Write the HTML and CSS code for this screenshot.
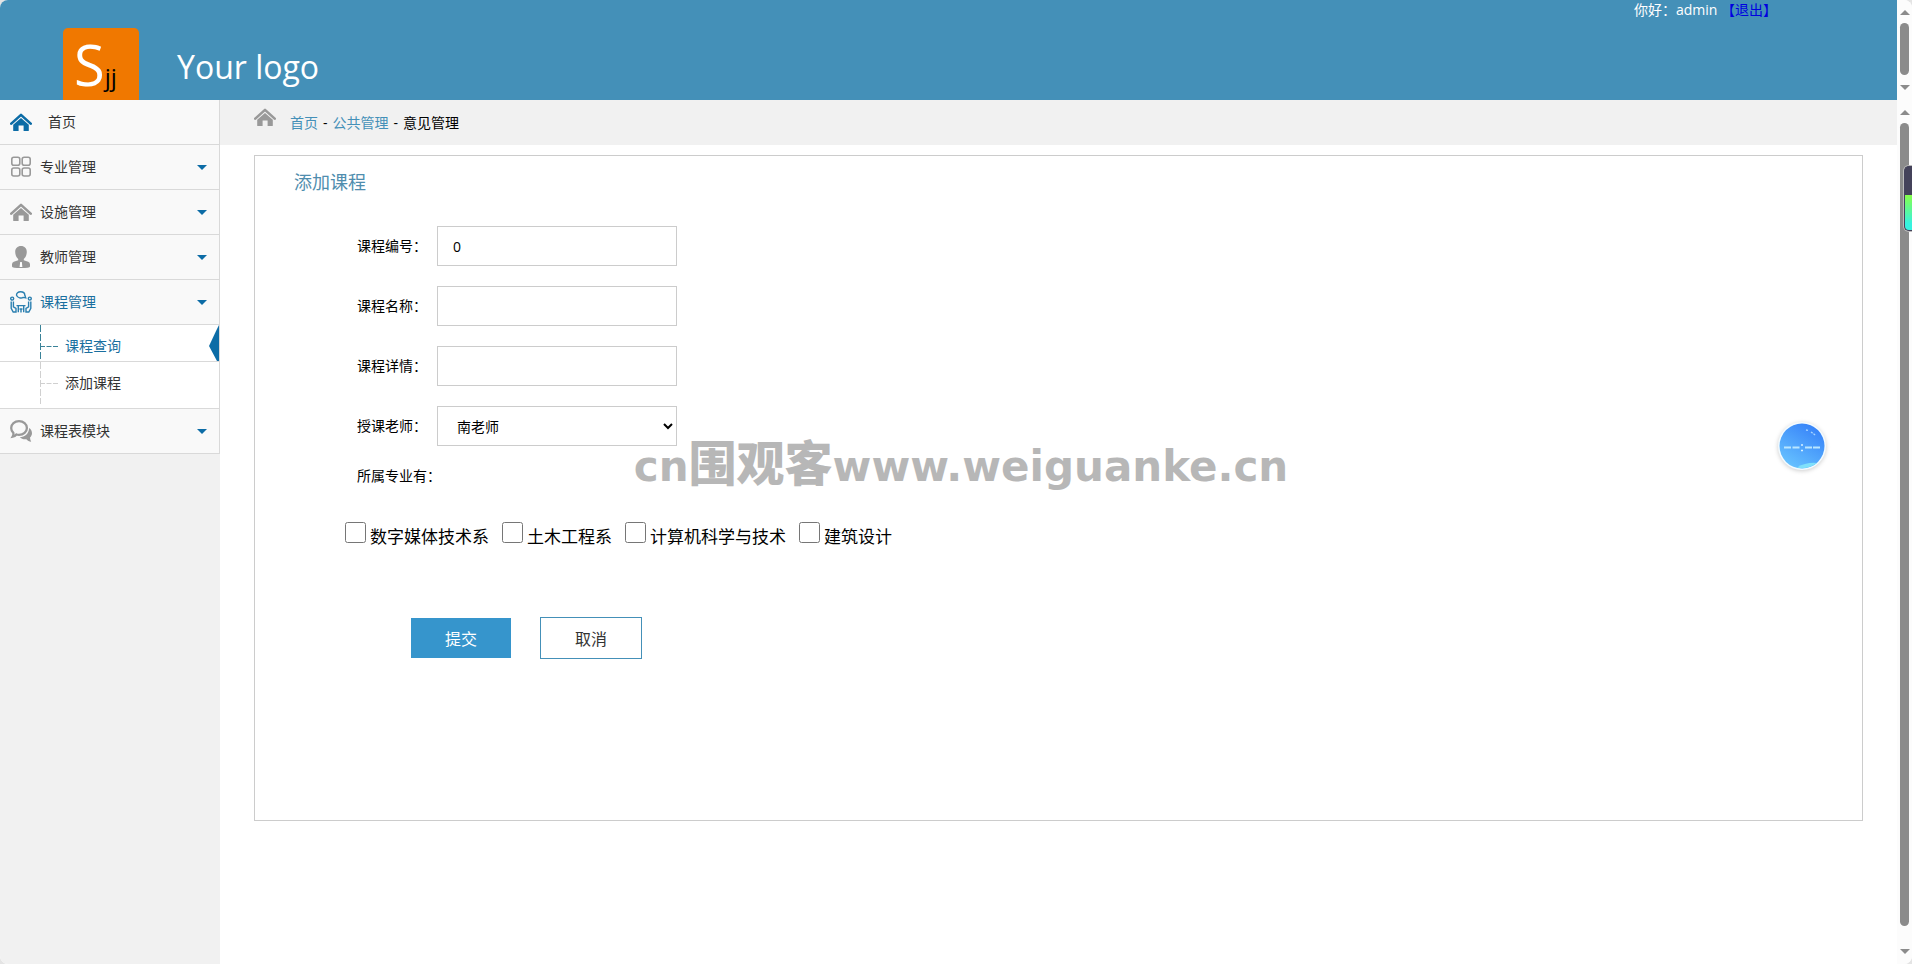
FILE: index.html
```html
<!DOCTYPE html>
<html lang="zh-CN">
<head>
  <meta charset="UTF-8">
  <meta name="viewport" content="width=device-width, initial-scale=1.0">
  <title>添加课程</title>
  <link rel="stylesheet" href="styles.css">
</head>
<body>
<svg class="defs" aria-hidden="true">
  <symbol id="icon-home" viewBox="0 0 22 18">
    <path d="M1.3 10.6 11 1.9l9.7 8.7" fill="none" stroke="currentColor" stroke-width="2.6" stroke-linecap="round" stroke-linejoin="round"/>
    <path d="M11 5 18.8 11.8V17.4q0 .6-.6.6H13.6V12.6H8.6V18H3.800q-.6 0-.6-.6V11.800Z" fill="currentColor"/>
  </symbol>
</svg>
<div class="page">
  <div class="top">
    <header class="header">
      <div class="logo"><span class="logo-s">S</span><span class="logo-j">jj</span></div>
      <div class="brand">Your logo</div>
      <div class="user">你好：admin <a href="#">【退出】</a></div>
    </header>
    <div class="scrollbar scrollbar-top">
      <span class="arrow-up"></span>
      <span class="thumb"></span>
      <span class="arrow-down"></span>
    </div>
  </div>

  <div class="main">
    <aside class="sidebar">
      <nav class="menu">
        <a class="menu-item home" href="#">
          <svg class="icon"><use href="#icon-home" y="2" width="22" height="18"/></svg>
          <span>首页</span>
        </a>
        <a class="menu-item" href="#">
          <svg class="icon" viewBox="0 0 22 22" fill="none" stroke="currentColor" stroke-width="1.6">
            <rect x="1.8" y="1.3" width="8" height="8" rx="2"/>
            <rect x="12.2" y="1.3" width="8" height="8" rx="2"/>
            <rect x="1.8" y="12" width="8" height="8" rx="2"/>
            <rect x="12.2" y="12" width="8" height="8" rx="2"/>
          </svg>
          <span>专业管理</span>
          <i class="caret"></i>
        </a>
        <a class="menu-item" href="#">
          <svg class="icon"><use href="#icon-home" y="2" width="22" height="18"/></svg>
          <span>设施管理</span>
          <i class="caret"></i>
        </a>
        <a class="menu-item" href="#">
          <svg class="icon" viewBox="0 0 22 22" fill="currentColor">
            <path d="M11 0c3.6 0 5.8 2.400 5.8 6 0 3-1.400 5.600-3 7v1.300l4.400 1.500q1.800.7 1.800 2.500v2.200Q20 22 11 22T2 20.500v-2.200q0-1.800 1.800-2.500l4.400-1.500V13c-1.600-1.400-3-4-3-7C5.200 2.400 7.400 0 11 0Z"/>
            <path d="M10.200 16h1.600l.6 5h-2.800Z" fill="#fff"/>
          </svg>
          <span>教师管理</span>
          <i class="caret"></i>
        </a>
        <a class="menu-item active" href="#">
          <svg class="icon" viewBox="0 0 22 22" fill="none" stroke="currentColor" stroke-width="1.4">
            <path d="M10.500.8c2.700 0 4.300 1.500 4.300 3.400l.9 2.700-2.500-.5c-1.600 1.200-5.800.8-6.700-2.300C6.500 2.300 8 .8 10.500.8Z"/>
            <circle cx="2.200" cy="7.600" r="1.500"/>
            <circle cx="19.800" cy="7.600" r="1.500"/>
            <path d="M1.200 10.500v6.800l2 3.700H6v-3.500l-2.600-1.700v-5.300M20.800 10.500v6.800l-2 3.700H16v-3.500l2.600-1.700v-5.300"/>
            <path d="M6.500 14.600h9M8.300 14.600v6.700M13.700 14.600v6.700M9.500 18h3M11 18v3.500"/>
          </svg>
          <span>课程管理</span>
          <i class="caret"></i>
        </a>
        <div class="submenu">
          <a class="sub-item current" href="#">
            <svg class="tree" viewBox="0 0 18 42" fill="none" stroke="currentColor">
              <path d="M.5 0V42" stroke-dasharray="7 2"/>
              <path d="M0 21.500H18" stroke-dasharray="5 1.500"/>
            </svg>
            <span>课程查询</span>
            <svg class="pointer" viewBox="0 0 10 36"><path d="M10 0V36H8L0 21 8 4Z" fill="#0c6ca6"/></svg>
          </a>
          <a class="sub-item last" href="#">
            <svg class="tree" viewBox="0 0 18 42" fill="none" stroke="currentColor">
              <path d="M.5 0V42" stroke-dasharray="7 2"/>
              <path d="M0 21.500H18" stroke-dasharray="5 1.500"/>
            </svg>
            <span>添加课程</span>
          </a>
        </div>
        <a class="menu-item" href="#">
          <svg class="icon" viewBox="0 0 22 22">
            <path d="M9 1.200c4.400 0 7.900 3 7.900 6.800s-3.500 6.900-7.900 6.900c-.9 0-1.800-.1-2.600-.4-1 1.300-2.200 2-3.700 2.200.7-1.100.9-2.300.7-3.700C1.900 11.800 1.200 10 1.200 8c0-3.800 3.400-6.800 7.800-6.800Z" fill="none" stroke="currentColor" stroke-width="2.300"/>
            <path d="M19.200 8c1.800 1.300 2.800 3.100 2.800 5.200 0 1.700-.8 3.200-2 4.300.1 1.500.5 2.900 1.200 4.300-2-.3-3.600-1.200-4.800-2.600-2.600.4-5-.3-6.700-1.900C15 17.200 18.800 13.600 19.200 8Z" fill="currentColor"/>
          </svg>
          <span>课程表模块</span>
          <i class="caret"></i>
        </a>
      </nav>
    </aside>

    <main class="content">
      <div class="breadcrumb">
        <svg class="crumb-icon"><use href="#icon-home" width="22" height="18"/></svg>
        <div class="crumbs">
          <a href="#">首页</a><span class="dash">-</span><a href="#">公共管理</a><span class="dash">-</span>意见管理
        </div>
      </div>

      <section class="panel">
        <h2>添加课程</h2>
        <form class="course-form">
          <div class="field">
            <label for="course-id">课程编号：</label>
            <input type="text" id="course-id" value="0">
          </div>
          <div class="field">
            <label for="course-name">课程名称：</label>
            <input type="text" id="course-name">
          </div>
          <div class="field">
            <label for="course-detail">课程详情：</label>
            <input type="text" id="course-detail">
          </div>
          <div class="field">
            <label for="teacher">授课老师：</label>
            <select id="teacher">
              <option>南老师</option>
            </select>
          </div>
          <p class="major-title">所属专业有：</p>
          <div class="majors">
            <label><input type="checkbox" name="major"><span>数字媒体技术系</span></label>
            <label><input type="checkbox" name="major"><span>土木工程系</span></label>
            <label><input type="checkbox" name="major"><span>计算机科学与技术</span></label>
            <label><input type="checkbox" name="major"><span>建筑设计</span></label>
          </div>
          <div class="buttons">
            <button type="submit" class="btn-submit">提交</button>
            <button type="reset" class="btn-cancel">取消</button>
          </div>
        </form>
      </section>
    </main>

    <div class="scrollbar scrollbar-main">
      <span class="arrow-up"></span>
      <span class="thumb"></span>
      <span class="arrow-down"></span>
    </div>
  </div>
</div>

<div class="watermark">cn<span>围观客</span>www.weiguanke.cn</div>

<svg class="float-ball" viewBox="0 0 60 60">
  <defs>
    <linearGradient id="ball" x1=".8" y1="0" x2=".2" y2="1">
      <stop offset="0" stop-color="#347ff8"/>
      <stop offset="1" stop-color="#69c5ff"/>
    </linearGradient>
  </defs>
  <circle class="ball-ring" cx="30" cy="30" r="24" fill="#f3fbff"/>
  <circle cx="30" cy="30" r="22.500" fill="url(#ball)"/>
  <path d="M12 31.500h7M20.500 31.500h7M33 31.500h7M41 31.500h7" stroke="#b9e6ff" stroke-width="2"/>
  <path d="M29 29h2M29 34.500h2" stroke="#d8f1ff" stroke-width="1.500"/>
  <path d="M34 14l3 .6M39 16l5 3.500" stroke="#a5d3ff" stroke-width="1.300" stroke-dasharray="2 1"/>
  <path d="M25 51.500Q34 46 45 47 36 54 25 51.500Z" fill="#7fe0fa"/>
</svg>

<div class="side-gauge"></div>
</body>
</html>
```
FILE: styles.css
```css
* {
  box-sizing: border-box;
}

body {
  margin: 0;
  background: #e4e4e4;
  font-family: "Open Sans", "Noto Sans CJK SC", sans-serif;
  font-size: 14px;
  line-height: 20px;
  color: #000;
}

a {
  text-decoration: none;
}

.defs {
  display: none;
}

.page {
  display: flex;
  flex-direction: column;
  min-height: 100vh;
  background: #fff;
  border-radius: 8px;
  overflow: hidden;
}

.top {
  display: flex;
}

/* header */
.header {
  flex: 1;
  display: flex;
  height: 100px;
  padding-left: 63px;
  padding-right: 120px;
  background: #4490b8;
  color: #fff;
}

.logo {
  width: 76px;
  margin-top: 28px;
  padding-left: 11px;
  background: #f07800;
  border-radius: 5px 5px 0 0;
  line-height: 72px;
  white-space: nowrap;
}

.logo-s {
  font-size: 56px;
}

.logo-j {
  font-size: 24px;
  color: #000;
}

.brand {
  margin-left: 38px;
  padding-top: 47px;
  font-size: 32px;
  line-height: 40px;
}

.user {
  margin-left: auto;
}

.user a {
  color: #0000e0;
}

/* scrollbars */
.scrollbar {
  display: flex;
  flex-direction: column;
  align-items: center;
  width: 15px;
  padding: 10px 0;
  background: #fcfcfc;
}

.thumb {
  flex: 1;
  width: 9px;
  margin: 8px 0 10px;
  background: #8b8b8b;
  border-radius: 5px;
}

.scrollbar-main .thumb {
  margin-bottom: 23px;
}

.arrow-up,
.arrow-down {
  border: 5px solid transparent;
}

.arrow-up {
  border-top: 0;
  border-bottom-color: #8b8b8b;
}

.arrow-down {
  border-bottom: 0;
  border-top-color: #8b8b8b;
}

.main {
  flex: 1;
  display: flex;
}

/* sidebar */
.sidebar {
  width: 220px;
  background: #f1f1f1;
}

.menu {
  border-right: 1px solid #d9d9d9;
  background: #f9f9f9;
}

.menu-item {
  display: flex;
  align-items: center;
  gap: 8px;
  height: 45px;
  padding: 0 12px 0 10px;
  border-bottom: 1px solid #d9d9d9;
  color: #333;
}

.menu-item.home {
  gap: 16px;
}

.menu-item.active {
  color: #1a6f9f;
}

.icon {
  width: 22px;
  height: 22px;
  color: #999;
}

.home .icon {
  color: #0c6ca6;
}

.active .icon {
  color: #2a7fb0;
}

.caret {
  margin-left: auto;
  border: 5px solid transparent;
  border-top-color: #0c6ca6;
  border-bottom: 0;
}

.submenu {
  background: #fff;
  border-bottom: 1px solid #d9d9d9;
}

.sub-item {
  display: flex;
  gap: 7px;
  height: 37px;
  padding-left: 40px;
  border-bottom: 1px solid #d9d9d9;
  line-height: 42px;
  color: #333;
  overflow: hidden;
}

.sub-item.current {
  color: #1a6f9f;
}

.sub-item.last {
  height: 46px;
  border-bottom: 0;
}

.tree {
  width: 18px;
  height: 42px;
  color: #d0d0d0;
}

.current .tree {
  color: #3a8298;
}

.pointer {
  width: 10px;
  height: 36px;
  margin-left: auto;
}

/* content */
.content {
  flex: 1;
}

.breadcrumb {
  display: flex;
  height: 45px;
  padding: 8px 34px;
  background: #f1f1f1;
}

.crumb-icon {
  width: 22px;
  height: 18px;
  margin-right: 14px;
  color: #999;
}

.crumbs {
  padding-top: 5px;
}

.crumbs a {
  color: #4490b8;
}

.dash {
  margin: 0 5px;
}

.panel {
  margin: 10px 34px;
  padding: 15px 39px 161px;
  border: 1px solid #ccc;
}

.panel h2 {
  margin: 0 0 33px;
  font-size: 18px;
  font-weight: normal;
  line-height: 22px;
  color: #4f8dae;
}

.field {
  display: flex;
  align-items: center;
  margin-bottom: 20px;
  padding-left: 63px;
}

.field label {
  width: 80px;
}

.field input,
.field select {
  width: 240px;
  height: 40px;
  padding: 0 15px;
  border: 1px solid #ccc;
  border-radius: 0;
  background: #fff;
  font-family: inherit;
  font-size: 14px;
  color: #000;
}

.field select {
  padding-right: 0;
}

.major-title {
  margin: 0 0 36px;
  padding-left: 63px;
}

.majors {
  display: flex;
  gap: 13px;
  padding-left: 51px;
  font-size: 17px;
  line-height: 22px;
}

.majors label {
  display: flex;
  gap: 4px;
}

.majors input {
  width: 21px;
  height: 21px;
  margin: 0;
}

.majors span {
  padding-top: 4px;
}

.buttons {
  display: flex;
  align-items: center;
  gap: 29px;
  margin-top: 69px;
  padding-left: 117px;
}

.buttons button {
  width: 100px;
  height: 40px;
  padding: 0;
  border: 0;
  background: #3695cc;
  color: #fff;
  font-family: inherit;
  font-size: 16px;
  cursor: pointer;
}

.buttons .btn-cancel {
  width: 102px;
  height: 42px;
  border: 1px solid #4490b8;
  background: #fff;
  color: #333;
}

/* things floating over the page */
.watermark {
  position: absolute;
  top: 436px;
  left: 0;
  right: 0;
  padding-left: 10px;
  font-family: "DejaVu Sans", sans-serif;
  font-size: 42px;
  font-weight: bold;
  line-height: 60px;
  text-align: center;
  color: #b7b7b7;
  pointer-events: none;
}

.watermark span {
  font-family: "Noto Sans CJK SC", sans-serif;
  font-size: 48px;
  font-weight: 900;
  line-height: 1;
}

.float-ball {
  position: fixed;
  top: 416px;
  right: 80px;
  width: 60px;
  height: 60px;
}

.ball-ring {
  filter: drop-shadow(0 1px 2px rgba(0, 0, 0, 0.2));
}

.side-gauge {
  position: fixed;
  top: 166px;
  right: 0;
  width: 8px;
  height: 65px;
  border: 1px solid #44425a;
  border-right: 0;
  border-radius: 5px 0 0 5px;
  box-shadow: 0 0 0 1px #bbb;
  background: linear-gradient(#44425a 28px, #86ff4a 28px, #37f3e0 90%);
}
```
